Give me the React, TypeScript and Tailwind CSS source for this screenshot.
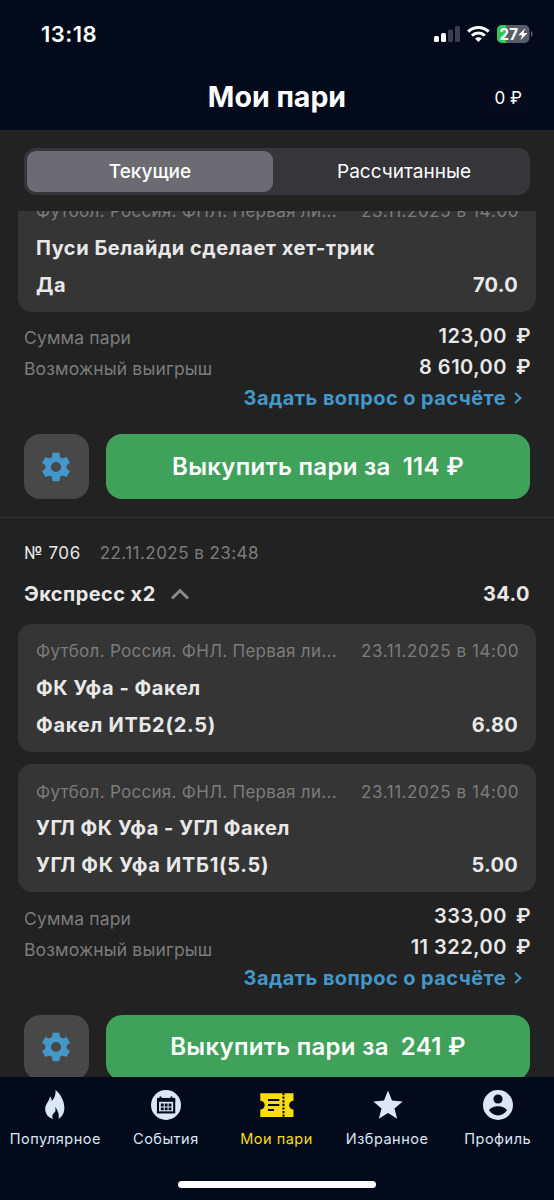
import React, { useState } from "react";

interface Leg {
  title: string;
  outcome: string;
  odds: string;
}

interface Bet {
  id: string;
  legs: Leg[];
  stake: string;
  win: string;
  cashout: string;
}

const BETS: Bet[] = [
  {
    id: "705",
    legs: [{ title: "Пуси Белайди сделает хет-трик", outcome: "Да", odds: "70.0" }],
    stake: "123,00",
    win: "8 610,00",
    cashout: "114 ₽",
  },
  {
    id: "706",
    legs: [
      { title: "ФК Уфа - Факел", outcome: "Факел ИТБ2(2.5)", odds: "6.80" },
      { title: "УГЛ ФК Уфа - УГЛ Факел", outcome: "УГЛ ФК Уфа ИТБ1(5.5)", odds: "5.00" },
    ],
    stake: "333,00",
    win: "11 322,00",
    cashout: "241 ₽",
  },
];

function StatusIcons() {
  return (
    <svg width="100" height="20" viewBox="0 0 100 20" className="shrink-0">
      <rect x="0" y="12" width="5" height="6" rx="1.6" fill="#fff" />
      <rect x="7" y="9" width="5" height="9" rx="1.6" fill="#fff" />
      <rect x="14" y="5.5" width="5" height="12.5" rx="1.6" fill="#393f4e" />
      <rect x="21" y="2" width="5" height="16" rx="1.6" fill="#393f4e" />
      <g fill="none" stroke="#fff" strokeWidth="3.1">
        <path d="M34.2 7.6a14.6 14.6 0 0 1 20.4 0" />
        <path d="M38 11.6a9.2 9.2 0 0 1 12.8 0" />
      </g>
      <path d="M44.4 18l-3.4-3.5a4.9 4.9 0 0 1 6.8 0z" fill="#fff" />
      <clipPath id="battery">
        <rect x="63" y="1" width="32.5" height="18" rx="5" />
      </clipPath>
      <g clipPath="url(#battery)">
        <rect x="63" y="1" width="33" height="18" fill="#585d69" />
        <rect x="63" y="1" width="9.2" height="18" fill="#34c759" />
      </g>
      <path d="M97 7c2 .8 2 5.4 0 6.2z" fill="#585d69" />
      <text x="65.6" y="16" fill="#fff" fontSize="16.5" fontWeight="700" fontFamily="Inter, sans-serif" textLength="18.5" lengthAdjust="spacingAndGlyphs">27</text>
      <path d="M91.2 4.2l-7 7h3.9l-1.6 5 7-7.2h-4z" fill="#fff" />
    </svg>
  );
}

function GearIcon() {
  return (
    <svg width="34" height="34" viewBox="0 0 24 24" fill="#4398cb" className="mr-px">
      <path d="M19.43 12.98c.04-.32.07-.64.07-.98s-.03-.66-.07-.98l2.11-1.65c.19-.15.24-.42.12-.64l-2-3.46c-.12-.22-.39-.3-.61-.22l-2.49 1c-.52-.4-1.08-.73-1.69-.98l-.38-2.65C14.46 2.18 14.25 2 14 2h-4c-.25 0-.46.18-.49.42l-.38 2.65c-.61.25-1.17.59-1.69.98l-2.49-1c-.23-.09-.49 0-.61.22l-2 3.46c-.13.22-.07.49.12.64l2.11 1.65c-.04.32-.07.65-.07.98s.03.66.07.98l-2.11 1.65c-.19.15-.24.42-.12.64l2 3.46c.12.22.39.3.61.22l2.49-1c.52.4 1.08.73 1.69.98l.38 2.65c.03.24.24.42.49.42h4c.25 0 .46-.18.49-.42l.38-2.65c.61-.25 1.17-.59 1.69-.98l2.49 1c.23.09.49 0 .61-.22l2-3.46c.12-.22.07-.49-.12-.64zM12 15.6A3.6 3.6 0 1 1 12 8.4a3.6 3.6 0 0 1 0 7.2z" />
    </svg>
  );
}

function FireIcon() {
  return (
    <svg width="36" height="32" viewBox="0 0 36 32" fill="#dce7f5">
      <path d="M18.6 1C23.5 5 27.4 12 27.4 19C27.4 24 25 28 21.5 29.8C22.8 26 20.5 21 18 17.5C19.2 22 18.3 22.8 17 24C15 25.7 14.8 28 16.2 29.9C11 28.8 8.2 24.5 8.2 20C8.2 15 12.7 12 13 7.3C14.3 8.8 14.8 10.3 14.7 12C17.6 9.5 18.8 5.5 18.6 1z" />
    </svg>
  );
}

function CalendarIcon() {
  return (
    <svg width="36" height="32" viewBox="0 0 36 32">
      <circle cx="18" cy="16" r="15" fill="#dce7f5" />
      <path d="M12.5 7.5v3M23.5 7.5v3" stroke="#020a1c" strokeWidth="2" />
      <rect x="10" y="10" width="16.2" height="13.4" fill="none" stroke="#020a1c" strokeWidth="2.1" />
      <path d="M9 11.5h18.2" stroke="#020a1c" strokeWidth="2.6" />
      <path d="M12.8 14.5h2.9v2.9h-2.9zM16.7 14.5h2.9v2.9h-2.9zM20.6 14.5h2.9v2.9h-2.9zM12.8 18.4h2.9v2.9h-2.9zM16.7 18.4h2.9v2.9h-2.9zM20.6 18.4h2.9v2.9h-2.9z" fill="#020a1c" />
    </svg>
  );
}

function TicketIcon() {
  return (
    <svg width="36" height="32" viewBox="0 0 36 32" className="ml-px">
      <path d="M1.3 4.3h33.2v7.4a4.4 4.4 0 0 0 0 8.8V28H1.3v-7.5a4.4 4.4 0 0 0 0-8.8z" fill="#fddd0b" />
      <path d="M9 11h11.3M9 16h11.3M9 21h6" stroke="#020a1c" strokeWidth="2" />
      <path d="M24.5 4v24" stroke="#020a1c" strokeWidth="2" strokeDasharray="2.2 1.4" />
    </svg>
  );
}

function StarIcon() {
  return (
    <svg width="36" height="32" viewBox="0 0 36 32" fill="#dce7f5" className="ml-px">
      <path d="M18 1.5l4 10.1 10.7.8-8.2 7 2.7 10.4L18 24.1l-9.2 5.7 2.7-10.4-8.2-7 10.7-.8z" />
    </svg>
  );
}

function ProfileIcon() {
  return (
    <svg width="36" height="32" viewBox="0 0 36 32" className="ml-px">
      <circle cx="18" cy="16" r="15" fill="#dce7f5" />
      <circle cx="18" cy="10" r="4.6" fill="#020a1c" />
      <path d="M9 21.3c1.7-3 6-4.1 9-4.1s7.3 1.1 9 4.1c-2 3-5.3 5.1-9 5.1s-7-2.1-9-5.1z" fill="#020a1c" />
    </svg>
  );
}

const NAV = [
  { label: "Популярное", icon: FireIcon },
  { label: "События", icon: CalendarIcon },
  { label: "Мои пари", icon: TicketIcon, active: true },
  { label: "Избранное", icon: StarIcon },
  { label: "Профиль", icon: ProfileIcon },
];

function LegCard({ leg }: { leg: Leg }) {
  return (
    <div className="h-32 rounded-[14px] bg-[#353535] px-[18px] pt-4">
      <div className="flex h-6 items-center justify-between text-[17px] text-[#7c7c7c]">
        <span className="whitespace-nowrap tracking-[0.3px]">Футбол. Россия. ФНЛ. Первая ли...</span>
        <span className="-mr-px whitespace-nowrap tracking-[0.56px]">23.11.2025 в 14:00</span>
      </div>
      <div className="mt-3 flex h-6 items-center text-[20px] font-bold tracking-[0.52px]">{leg.title}</div>
      <div className="mt-[13px] flex h-6 items-center justify-between text-[20px] font-bold">
        <span className="tracking-[0.7px]">{leg.outcome}</span>
        <span className="tracking-[0.3px]">{leg.odds}</span>
      </div>
    </div>
  );
}

function Amount({ label, value }: { label: string; value: string }) {
  return (
    <div className="flex h-[31px] items-center justify-between">
      <span className="pt-1.5 text-[17.5px] tracking-[0.15px] text-[#7c7c7c]">{label}</span>
      <span className="flex gap-[9px] text-[20px] font-semibold tracking-[0.5px]">
        <span>{value}</span>
        <span className="-mr-px">₽</span>
      </span>
    </div>
  );
}

function BetFooter({ bet }: { bet: Bet }) {
  return (
    <div className="px-6 pt-2">
      <Amount label="Сумма пари" value={bet.stake} />
      <Amount label="Возможный выигрыш" value={bet.win} />
      <button className="ml-auto flex h-[31px] items-center gap-2 pr-2 text-[20px] font-bold tracking-[0.42px] text-[#4398cb]">
        Задать вопрос о расчёте
        <svg width="8" height="12" viewBox="0 0 8 12" fill="none" stroke="#4398cb" strokeWidth="2">
          <path d="M1 1l5.5 5L1 11" />
        </svg>
      </button>
      <div className="mt-[21.4px] flex gap-[17px]">
        <button className="flex size-[65px] shrink-0 items-center justify-center rounded-2xl bg-[#484848]">
          <GearIcon />
        </button>
        <button className="flex h-[65px] flex-1 items-center justify-center gap-3 rounded-2xl bg-[#3fa15a] text-[24px] font-semibold tracking-[0.3px] text-white">
          <span>Выкупить пари за</span>
          <span>{bet.cashout}</span>
        </button>
      </div>
    </div>
  );
}

export default function App() {
  const [tab, setTab] = useState(0);

  return (
    <div className="flex h-[1200px] w-[554px] flex-col overflow-hidden bg-[#222222] font-[Inter,sans-serif] text-[#e8e8e8]">
      <header className="h-[130px] shrink-0 bg-[#020a1c] text-white">
        <div className="flex h-[68px] items-center justify-between pr-5 pl-[41px]">
          <span className="text-[22px] font-semibold tracking-[0.5px]">13:18</span>
          <StatusIcons />
        </div>
        <div className="grid h-[58px] grid-cols-[1fr_auto_1fr] items-center pr-6">
          <span />
          <h1 className="ml-6 text-[28.5px] font-bold">Мои пари</h1>
          <span className="mt-1 justify-self-end rounded-md bg-[#050b1b] px-2 py-1 text-[17px]">0 ₽</span>
        </div>
      </header>

      {/* Current / settled switch */}
      <div className="shrink-0 px-6 pt-[18px] pb-4">
        <div className="flex h-[47px] gap-2 rounded-xl bg-[#36353a] p-[3px]">
          {["Текущие", "Рассчитанные"].map((label, idx) => (
            <button
              key={label}
              onClick={() => setTab(idx)}
              className={`flex-1 rounded-[9px] pt-0.5 text-[19px] text-white ${
                tab === idx ? "bg-[#6c6b71] font-medium" : ""
              }`}
            >
              {label}
            </button>
          ))}
        </div>
      </div>

      <main className="min-h-0 flex-1 overflow-hidden">
        <div className="-mt-[27px]">
          <div className="px-[18px]">
            <LegCard leg={BETS[0].legs[0]} />
          </div>
          <BetFooter bet={BETS[0]} />
        </div>

        <div className="mt-[17.6px] border-t border-[#343434]">
          <div className="mt-6 flex h-6 items-center gap-[19px] px-6 text-[17px]">
            <span className="tracking-[0.55px]">№ {BETS[1].id}</span>
            <span className="tracking-[0.45px] text-[#7c7c7c]">22.11.2025 в 23:48</span>
          </div>
          <div className="mt-4 flex h-6 items-center justify-between px-6 text-[20px] font-bold tracking-[0.42px]">
            <span className="flex items-center gap-[15px]">
              Экспресс x2
              <svg width="18" height="12" viewBox="0 0 18 12" fill="none" stroke="#8b8b8b" strokeWidth="3">
                <path d="M1 10.5l8-8 8 8" />
              </svg>
            </span>
            <span>34.0</span>
          </div>
          <div className="mt-[18px] space-y-[12.5px] px-[18px]">
            {BETS[1].legs.map((leg) => (
              <LegCard key={leg.title} leg={leg} />
            ))}
          </div>
          <BetFooter bet={BETS[1]} />
        </div>
      </main>

      <nav className="h-[123px] shrink-0 bg-[#020a1c]">
        <div className="grid grid-cols-5 pt-3 pr-px">
          {NAV.map(({ label, icon: Icon, active }) => (
            <button
              key={label}
              className={`flex flex-col items-center text-[14.5px] tracking-[0.5px] whitespace-nowrap ${
                active ? "text-[#fddd0b]" : "text-[#dce7f5]"
              }`}
            >
              <Icon />
              <span className="mt-2 leading-5">{label}</span>
            </button>
          ))}
        </div>
        <div className="mx-auto mt-[32px] h-[7px] w-[198px] rounded-full bg-white" />
      </nav>
    </div>
  );
}
